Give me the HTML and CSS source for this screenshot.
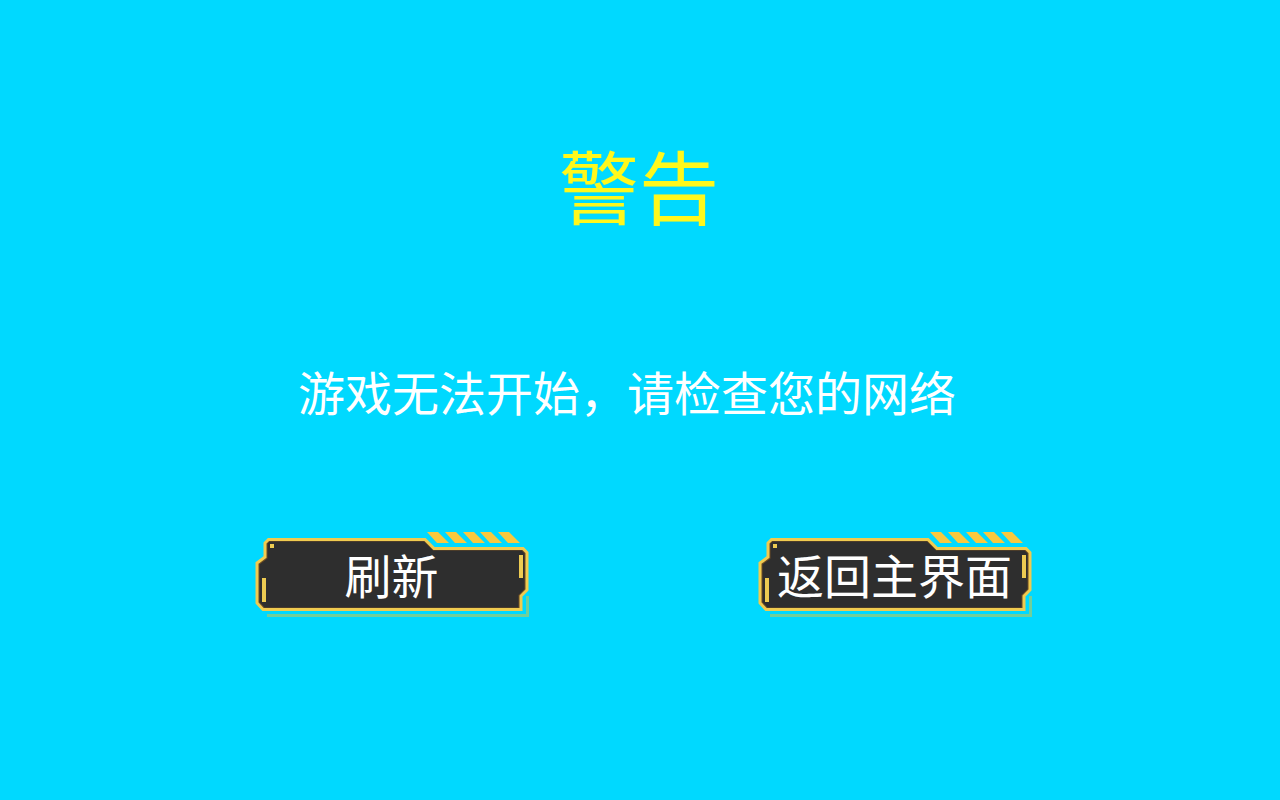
FILE: index.html
```
<!DOCTYPE html>
<html lang="zh-CN">
<head>
    <meta charset="UTF-8">
    <meta name="viewport" content="width=device-width, initial-scale=1.0">
    <title>警告</title>
    <link rel="stylesheet" href="styles.css">
</head>
<body>
    <!-- Button frame, shared by both buttons -->
    <svg class="defs" width="0" height="0" aria-hidden="true">
        <symbol id="frame" viewBox="0 0 276 88">
            <path d="M13 85.5H273.5V66" fill="none" stroke="#72cf9a" stroke-width="3"/>
            <path d="M15.5 10.5H170.5L179.5 19.5H268L271.5 23V59.5L265.5 65.5V78.5H10L4.5 72.5V34L12.5 28V13Z" fill="#2e2e2e" stroke="#6b4a24" stroke-width="2"/>
            <path d="M14.5 9.5H171L180 18.5H269L273 22.5V60L267 66V79.5H9L3 73V33L11 27V13Z" fill="none" stroke="#f0cb50" stroke-width="3"/>
            <path d="M173 2h11l11 11h-12zM191 2h11l11 11h-12zM209 2h11l11 11h-12zM226 2h11l11 11h-12zM244 2h11l11 11h-12z" fill="#fac83e"/>
            <path d="M16 14h4v4h-4zM8 48h4v24h-4zM265 25h4v23h-4z" fill="#edcb52"/>
        </symbol>
    </svg>

    <main class="container">
        <h1 class="title">警告</h1>
        <p class="message">游戏无法开始，请检查您的网络</p>
        <div class="buttons">
            <button type="button" class="btn">
                <svg class="btn-frame" aria-hidden="true"><use href="#frame"/></svg>
                <span class="btn-text">刷新</span>
            </button>
            <button type="button" class="btn">
                <svg class="btn-frame" aria-hidden="true"><use href="#frame"/></svg>
                <span class="btn-text">返回主界面</span>
            </button>
        </div>
    </main>
</body>
</html>
```
FILE: styles.css
```
body {
    margin: 0;
    background-color: #00d9ff;
    font-family: "Noto Sans CJK SC", sans-serif;
    color: white;
}
.defs {
    display: block;
}
.container {
    display: flex;
    flex-direction: column;
    align-items: center;
    padding-top: 123px;
}
.title {
    margin: 0;
    padding-right: 2px;
    color: #fff81c;
    font-size: 80px;
    font-weight: 400;
    line-height: 120px;
}
.message {
    margin: 114px 0 0;
    padding-right: 26px;
    font-size: 47px;
    line-height: 68px;
}
.buttons {
    display: flex;
    gap: 227px;
    margin-top: 105px;
    padding-left: 6px;
}
.btn {
    position: relative;
    width: 276px;
    height: 88px;
    padding: 0;
    border: none;
    background: none;
    color: inherit;
    font-family: inherit;
    font-size: 47px;
    line-height: 68px;
    cursor: pointer;
}
.btn-frame {
    position: absolute;
    top: 0;
    left: 0;
    width: 100%;
    height: 100%;
}
.btn-text {
    position: relative;
}
```
